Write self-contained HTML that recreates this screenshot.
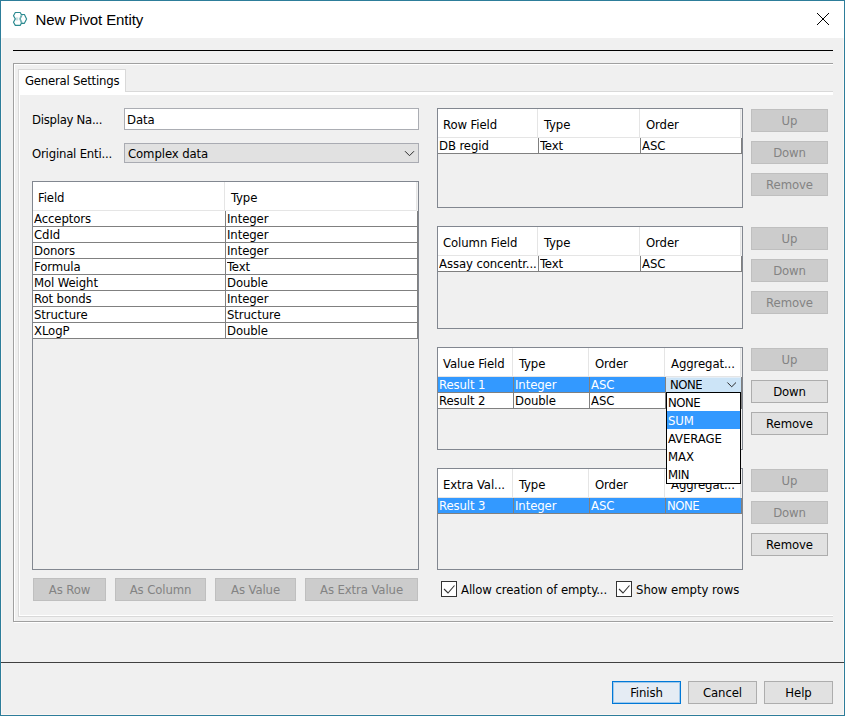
<!DOCTYPE html>
<html>
<head>
<meta charset="utf-8">
<title>New Pivot Entity</title>
<style>
html,body{margin:0;padding:0;}
body{width:845px;height:716px;overflow:hidden;background:#f0f0f0;font-family:"DejaVu Sans Condensed","Liberation Sans",sans-serif;font-size:13px;letter-spacing:-0.1px;color:#000;position:relative;}
.win{position:absolute;left:0;top:0;width:845px;height:716px;background:#f0f0f0;overflow:hidden;}
.win *{position:absolute;box-sizing:border-box;}
.titlebar{left:1px;top:1px;width:843px;height:37px;background:#fff;}
.title{font-family:"Liberation Sans",sans-serif;left:35.5px;top:11px;letter-spacing:-0.1px;font-size:15px;line-height:18px;white-space:nowrap;}
.t{white-space:nowrap;line-height:16px;height:16px;}
.hline{height:1px;background:#000;}
.btn{height:23px;border:1px solid #adadad;background:#e1e1e1;text-align:center;line-height:21px;white-space:nowrap;}
.btn.dis{background:#cccccc;border-color:#bfbfbf;color:#838383;}
.btn.def{border:1px solid #0078d7;background:#e5ecf4;box-shadow:inset 0 0 0 1px rgba(0,120,215,0.3);}
.tbl{border:1px solid #828790;}
.hdr{background:#fff;height:28px;}
.hs{width:1px;height:28px;background:#e5e5e5;}
.hb{height:1px;background:#e5e5e5;}
.row{background:#fff;height:15px;}
.row.sel{background:#3399ff;}
.c{white-space:nowrap;line-height:15px;height:15px;overflow:hidden;}
.c.sel{color:#fff;}
.g{background:#808080;}
.cb{width:16px;height:16px;background:#fff;border:1px solid #333;}
</style>
</head>
<body>
<div class="win">

<div style="left:0;top:0;width:845px;height:716px;border:1px solid #2d7d9a;"></div>
<div class="titlebar"></div>
<svg style="left:10px;top:9px" width="20" height="20" viewBox="10 9 20 20">
 <g fill="none" stroke="#2b8a90" stroke-width="1.15" stroke-linejoin="round" stroke-linecap="round">
  <path d="M21.4 14.5 L20.2 12.5 L15.3 12.5 L13.5 15.7 L15.3 18.9 L13.5 22.2 L15.3 25.4 L20.2 25.4 L21.4 23.3 L24.4 23.3 L26.6 18.9 L24.4 14.5 Z"/>
  <path d="M21.4 14.5 L22 15.7 L20.3 18.9 L22 22.2 L21.4 23.3 M21.4 14.5 L19.7 18.9 L21.4 23.3" stroke-opacity="0.7" stroke-width="1"/>
  <rect x="15.9" y="17.4" width="2.4" height="3.1" fill="#2b8a90" fill-opacity="0.28" stroke="none"/>
 </g>
</svg>
<div class="title">New Pivot Entity</div>
<svg style="left:816px;top:12px" width="14" height="14" viewBox="0 0 14 14"><path d="M1 1 L13 13 M13 1 L1 13" stroke="#000" stroke-width="1" fill="none"/></svg>
<div class="hline" style="left:13px;top:50px;width:820px;"></div>
<div style="left:13px;top:63px;width:820px;height:560px;overflow:hidden;">
 <div style="left:1px;top:1px;width:830px;height:559px;border:1px solid #fff;"></div>
 <div style="left:0;top:0;width:830px;height:559px;border:1px solid #a0a0a0;"></div>
</div>
<div style="left:18px;top:91px;width:815px;height:526px;overflow:hidden;">
 <div style="left:0;top:0;width:830px;height:526px;border:1px solid #d9d9d9;"></div>
 <div style="left:1px;top:1px;width:830px;height:524px;border:1px solid #fff;border-top-width:3px;"></div>
</div>
<div style="left:18px;top:69px;width:108px;height:23px;background:#fff;border:1px solid #d9d9d9;border-bottom:none;"></div>
<div class="t" style="left:25px;top:73px;letter-spacing:-0.22px">General Settings</div>
<div class="t" style="left:32px;top:112px;letter-spacing:-0.28px">Display Na...</div>
<div style="left:124px;top:108px;width:295px;height:22px;background:#fff;border:1px solid #abadb3;"></div>
<div class="t" style="left:127px;top:112px;">Data</div>
<div class="t" style="left:32px;top:146px;letter-spacing:-0.2px">Original Enti...</div>
<div style="left:124px;top:143px;width:295px;height:20px;background:#e1e1e1;border:1px solid #a9abb2;"></div>
<div class="t" style="left:128px;top:146px;">Complex data</div>
<svg style="left:403px;top:149px" width="13" height="9" viewBox="403 149 13 9"><path d="M405 151.2 L409.5 155.7 L414 151.2" stroke="#2a2a2a" stroke-width="1" fill="none"/></svg>
<div class="tbl" style="left:32px;top:181px;width:387px;height:389px;"></div>
<div class="hdr" style="left:33px;top:182px;width:383px;"></div>
<div class="hs" style="left:224px;top:182px;"></div>
<div class="hs" style="left:416px;top:182px;"></div>
<div class="hb" style="left:33px;top:210px;width:384px;"></div>
<div class="t" style="left:38px;top:190px;">Field</div>
<div class="t" style="left:231px;top:190px;">Type</div>
<div class="row" style="left:33px;top:211px;width:384px;"></div>
<div class="g" style="left:225px;top:211px;width:1px;height:16px;"></div>
<div class="g" style="left:417px;top:211px;width:1px;height:16px;"></div>
<div class="g" style="left:33px;top:226px;width:385px;height:1px;"></div>
<div class="c" style="left:34px;top:211px;width:191px;">Acceptors</div>
<div class="c" style="left:227px;top:211px;width:190px;">Integer</div>
<div class="row" style="left:33px;top:227px;width:384px;"></div>
<div class="g" style="left:225px;top:227px;width:1px;height:16px;"></div>
<div class="g" style="left:417px;top:227px;width:1px;height:16px;"></div>
<div class="g" style="left:33px;top:242px;width:385px;height:1px;"></div>
<div class="c" style="left:34px;top:227px;width:191px;">CdId</div>
<div class="c" style="left:227px;top:227px;width:190px;">Integer</div>
<div class="row" style="left:33px;top:243px;width:384px;"></div>
<div class="g" style="left:225px;top:243px;width:1px;height:16px;"></div>
<div class="g" style="left:417px;top:243px;width:1px;height:16px;"></div>
<div class="g" style="left:33px;top:258px;width:385px;height:1px;"></div>
<div class="c" style="left:34px;top:243px;width:191px;">Donors</div>
<div class="c" style="left:227px;top:243px;width:190px;">Integer</div>
<div class="row" style="left:33px;top:259px;width:384px;"></div>
<div class="g" style="left:225px;top:259px;width:1px;height:16px;"></div>
<div class="g" style="left:417px;top:259px;width:1px;height:16px;"></div>
<div class="g" style="left:33px;top:274px;width:385px;height:1px;"></div>
<div class="c" style="left:34px;top:259px;width:191px;">Formula</div>
<div class="c" style="left:227px;top:259px;width:190px;">Text</div>
<div class="row" style="left:33px;top:275px;width:384px;"></div>
<div class="g" style="left:225px;top:275px;width:1px;height:16px;"></div>
<div class="g" style="left:417px;top:275px;width:1px;height:16px;"></div>
<div class="g" style="left:33px;top:290px;width:385px;height:1px;"></div>
<div class="c" style="left:34px;top:275px;width:191px;">Mol Weight</div>
<div class="c" style="left:227px;top:275px;width:190px;">Double</div>
<div class="row" style="left:33px;top:291px;width:384px;"></div>
<div class="g" style="left:225px;top:291px;width:1px;height:16px;"></div>
<div class="g" style="left:417px;top:291px;width:1px;height:16px;"></div>
<div class="g" style="left:33px;top:306px;width:385px;height:1px;"></div>
<div class="c" style="left:34px;top:291px;width:191px;">Rot bonds</div>
<div class="c" style="left:227px;top:291px;width:190px;">Integer</div>
<div class="row" style="left:33px;top:307px;width:384px;"></div>
<div class="g" style="left:225px;top:307px;width:1px;height:16px;"></div>
<div class="g" style="left:417px;top:307px;width:1px;height:16px;"></div>
<div class="g" style="left:33px;top:322px;width:385px;height:1px;"></div>
<div class="c" style="left:34px;top:307px;width:191px;">Structure</div>
<div class="c" style="left:227px;top:307px;width:190px;">Structure</div>
<div class="row" style="left:33px;top:323px;width:384px;"></div>
<div class="g" style="left:225px;top:323px;width:1px;height:16px;"></div>
<div class="g" style="left:417px;top:323px;width:1px;height:16px;"></div>
<div class="g" style="left:33px;top:338px;width:385px;height:1px;"></div>
<div class="c" style="left:34px;top:323px;width:191px;">XLogP</div>
<div class="c" style="left:227px;top:323px;width:190px;">Double</div>
<div class="tbl" style="left:437px;top:108px;width:306px;height:100px;"></div>
<div class="hdr" style="left:438px;top:109px;width:302px;"></div>
<div class="hs" style="left:537px;top:109px;"></div>
<div class="hs" style="left:639px;top:109px;"></div>
<div class="hs" style="left:740px;top:109px;"></div>
<div class="hb" style="left:438px;top:137px;width:303px;"></div>
<div class="t" style="left:443px;top:117px;">Row Field</div>
<div class="t" style="left:544px;top:117px;">Type</div>
<div class="t" style="left:646px;top:117px;">Order</div>
<div class="row" style="left:438px;top:138px;width:303px;"></div>
<div class="g" style="left:538px;top:138px;width:1px;height:16px;"></div>
<div class="g" style="left:640px;top:138px;width:1px;height:16px;"></div>
<div class="g" style="left:741px;top:138px;width:1px;height:16px;"></div>
<div class="g" style="left:438px;top:153px;width:304px;height:1px;"></div>
<div class="c" style="left:439px;top:138px;width:99px;">DB regid</div>
<div class="c" style="left:540px;top:138px;width:100px;">Text</div>
<div class="c" style="left:642px;top:138px;width:99px;">ASC</div>
<div class="tbl" style="left:437px;top:226px;width:306px;height:103px;"></div>
<div class="hdr" style="left:438px;top:227px;width:302px;"></div>
<div class="hs" style="left:537px;top:227px;"></div>
<div class="hs" style="left:639px;top:227px;"></div>
<div class="hs" style="left:740px;top:227px;"></div>
<div class="hb" style="left:438px;top:255px;width:303px;"></div>
<div class="t" style="left:443px;top:235px;">Column Field</div>
<div class="t" style="left:544px;top:235px;">Type</div>
<div class="t" style="left:646px;top:235px;">Order</div>
<div class="row" style="left:438px;top:256px;width:303px;"></div>
<div class="g" style="left:538px;top:256px;width:1px;height:16px;"></div>
<div class="g" style="left:640px;top:256px;width:1px;height:16px;"></div>
<div class="g" style="left:741px;top:256px;width:1px;height:16px;"></div>
<div class="g" style="left:438px;top:271px;width:304px;height:1px;"></div>
<div class="c" style="left:439px;top:256px;width:99px;">Assay concentr...</div>
<div class="c" style="left:540px;top:256px;width:100px;">Text</div>
<div class="c" style="left:642px;top:256px;width:99px;">ASC</div>
<div class="tbl" style="left:437px;top:347px;width:306px;height:103px;"></div>
<div class="hdr" style="left:438px;top:348px;width:302px;"></div>
<div class="hs" style="left:512px;top:348px;"></div>
<div class="hs" style="left:588px;top:348px;"></div>
<div class="hs" style="left:664px;top:348px;"></div>
<div class="hs" style="left:740px;top:348px;"></div>
<div class="hb" style="left:438px;top:376px;width:303px;"></div>
<div class="t" style="left:443px;top:356px;">Value Field</div>
<div class="t" style="left:519px;top:356px;">Type</div>
<div class="t" style="left:595px;top:356px;">Order</div>
<div class="t" style="left:671px;top:356px;">Aggregat...</div>
<div class="row sel" style="left:438px;top:377px;width:303px;"></div>
<div class="g" style="left:513px;top:377px;width:1px;height:16px;"></div>
<div class="g" style="left:589px;top:377px;width:1px;height:16px;"></div>
<div class="g" style="left:665px;top:377px;width:1px;height:16px;"></div>
<div class="g" style="left:741px;top:377px;width:1px;height:16px;"></div>
<div class="g" style="left:438px;top:392px;width:304px;height:1px;"></div>
<div class="c sel" style="left:439px;top:377px;width:74px;">Result 1</div>
<div class="c sel" style="left:515px;top:377px;width:74px;">Integer</div>
<div class="c sel" style="left:591px;top:377px;width:74px;">ASC</div>
<div class="row" style="left:438px;top:393px;width:303px;"></div>
<div class="g" style="left:513px;top:393px;width:1px;height:16px;"></div>
<div class="g" style="left:589px;top:393px;width:1px;height:16px;"></div>
<div class="g" style="left:665px;top:393px;width:1px;height:16px;"></div>
<div class="g" style="left:741px;top:393px;width:1px;height:16px;"></div>
<div class="g" style="left:438px;top:408px;width:304px;height:1px;"></div>
<div class="c" style="left:439px;top:393px;width:74px;">Result 2</div>
<div class="c" style="left:515px;top:393px;width:74px;">Double</div>
<div class="c" style="left:591px;top:393px;width:74px;">ASC</div>
<div class="c" style="left:667px;top:393px;width:74px;"></div>
<div class="tbl" style="left:437px;top:468px;width:306px;height:102px;"></div>
<div class="hdr" style="left:438px;top:469px;width:302px;"></div>
<div class="hs" style="left:512px;top:469px;"></div>
<div class="hs" style="left:588px;top:469px;"></div>
<div class="hs" style="left:664px;top:469px;"></div>
<div class="hs" style="left:740px;top:469px;"></div>
<div class="hb" style="left:438px;top:497px;width:303px;"></div>
<div class="t" style="left:443px;top:477px;">Extra Val...</div>
<div class="t" style="left:519px;top:477px;">Type</div>
<div class="t" style="left:595px;top:477px;">Order</div>
<div class="t" style="left:671px;top:477px;">Aggregat...</div>
<div class="row sel" style="left:438px;top:498px;width:303px;"></div>
<div class="g" style="left:513px;top:498px;width:1px;height:16px;"></div>
<div class="g" style="left:589px;top:498px;width:1px;height:16px;"></div>
<div class="g" style="left:665px;top:498px;width:1px;height:16px;"></div>
<div class="g" style="left:741px;top:498px;width:1px;height:16px;"></div>
<div class="g" style="left:438px;top:513px;width:304px;height:1px;"></div>
<div class="c sel" style="left:439px;top:498px;width:74px;">Result 3</div>
<div class="c sel" style="left:515px;top:498px;width:74px;">Integer</div>
<div class="c sel" style="left:591px;top:498px;width:74px;">ASC</div>
<div class="c sel" style="left:667px;top:498px;width:74px;letter-spacing:-0.5px;">NONE</div>
<div class="btn dis" style="left:751px;top:109px;width:77px;">Up</div>
<div class="btn dis" style="left:751px;top:141px;width:77px;">Down</div>
<div class="btn dis" style="left:751px;top:173px;width:77px;">Remove</div>
<div class="btn dis" style="left:751px;top:227px;width:77px;">Up</div>
<div class="btn dis" style="left:751px;top:259px;width:77px;">Down</div>
<div class="btn dis" style="left:751px;top:291px;width:77px;">Remove</div>
<div class="btn dis" style="left:751px;top:348px;width:77px;">Up</div>
<div class="btn " style="left:751px;top:380px;width:77px;">Down</div>
<div class="btn " style="left:751px;top:412px;width:77px;">Remove</div>
<div class="btn dis" style="left:751px;top:469px;width:77px;">Up</div>
<div class="btn dis" style="left:751px;top:501px;width:77px;">Down</div>
<div class="btn " style="left:751px;top:533px;width:77px;">Remove</div>
<div style="left:666px;top:377px;width:75px;height:15px;background:#cce4f7;border-top:1px solid #e3eef8;"></div>
<div class="c" style="left:670px;top:377px;letter-spacing:-0.5px">NONE</div>
<svg style="left:725px;top:380px" width="13" height="9" viewBox="725 380 13 9"><path d="M727.4 382.5 L731.7 386.8 L736 382.5" stroke="#2a2a2a" stroke-width="1" fill="none"/></svg>
<div style="left:666px;top:392px;width:75px;height:92px;background:#fff;border:1px solid #000;"></div>
<div class="t" style="left:668px;top:395px;letter-spacing:-0.5px;">NONE</div>
<div style="left:667px;top:411px;width:73px;height:18px;background:#3399ff;"></div>
<div class="t" style="left:668px;top:413px;color:#fff;">SUM</div>
<div class="t" style="left:668px;top:431px;">AVERAGE</div>
<div class="t" style="left:668px;top:449px;">MAX</div>
<div class="t" style="left:668px;top:467px;letter-spacing:-0.35px;">MIN</div>
<div class="btn dis" style="left:33px;top:578px;width:73px;">As Row</div>
<div class="btn dis" style="left:115px;top:578px;width:91px;">As Column</div>
<div class="btn dis" style="left:215px;top:578px;width:81px;">As Value</div>
<div class="btn dis" style="left:305px;top:578px;width:113px;">As Extra Value</div>
<div class="cb" style="left:441px;top:581px;"></div>
<svg style="left:441px;top:581px" width="16" height="16" viewBox="0 0 16 16"><path d="M3 8 L7 12 L13.5 4.5" stroke="#333" stroke-width="1.1" fill="none"/></svg>
<div class="t" style="left:461px;top:582px;letter-spacing:-0.08px">Allow creation of empty...</div>
<div class="cb" style="left:616px;top:581px;"></div>
<svg style="left:616px;top:581px" width="16" height="16" viewBox="0 0 16 16"><path d="M3 8 L7 12 L13.5 4.5" stroke="#333" stroke-width="1.1" fill="none"/></svg>
<div class="t" style="left:636px;top:582px;letter-spacing:-0.04px">Show empty rows</div>
<div style="left:1px;top:38px;width:843px;height:677px;border:1px solid #fbf6f4;border-top:none;"></div>
<div class="hline" style="left:1px;top:662px;width:843px;background:#404040;"></div>
<div class="btn def" style="left:612px;top:681px;width:69px;">Finish</div>
<div class="btn " style="left:688px;top:681px;width:69px;">Cancel</div>
<div class="btn " style="left:764px;top:681px;width:69px;">Help</div>
</div>
</body>
</html>
